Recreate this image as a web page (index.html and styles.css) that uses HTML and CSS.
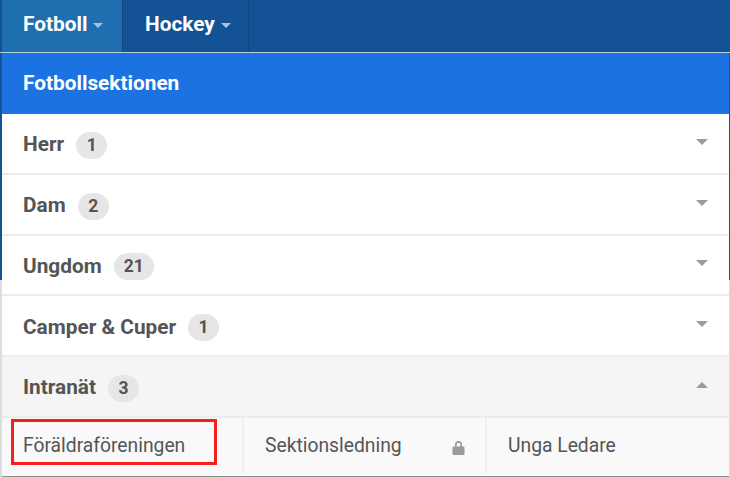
FILE: index.html
```html
<!DOCTYPE html>
<html lang="en">
  <head>
    <meta charset="UTF-8" />
    <meta name="viewport" content="width=device-width, initial-scale=1.0" />
    <title>Fotboll</title>
    <link rel="stylesheet" href="styles.css">
  </head>

  <body>
    <nav class="topnav">
      <a class="tab tab-active">Fotboll <span class="caret"></span></a>
      <a class="tab">Hockey <span class="caret"></span></a>
    </nav>

    <section class="panel">
      <h1 class="panel-title">Fotbollsektionen</h1>

      <div class="row">
        <span class="row-name">Herr</span>
        <span class="count">1</span>
        <span class="arrow"></span>
      </div>
      <div class="row">
        <span class="row-name">Dam</span>
        <span class="count">2</span>
        <span class="arrow"></span>
      </div>
      <div class="row">
        <span class="row-name">Ungdom</span>
        <span class="count">21</span>
        <span class="arrow"></span>
      </div>
      <div class="row">
        <span class="row-name">Camper &amp; Cuper</span>
        <span class="count">1</span>
        <span class="arrow"></span>
      </div>
      <div class="row row-open">
        <span class="row-name">Intranät</span>
        <span class="count">3</span>
        <span class="arrow arrow-up"></span>
      </div>

      <div class="sub">
        <a class="sub-item sub-first">Föräldraföreningen</a>
        <a class="sub-item sub-second">
          Sektionsledning
          <svg class="lock" width="13" height="15" viewBox="0 0 13 15">
            <path d="M3 7V4.6a3.5 3.5 0 0 1 7 0V7H8.3V4.6a1.8 1.8 0 0 0-3.6 0V7z" fill="#9b9b9b" />
            <rect x="0.5" y="6.5" width="12" height="8.5" rx="1.2" fill="#9b9b9b" />
          </svg>
        </a>
        <a class="sub-item">Unga Ledare</a>
      </div>
    </section>
  </body>
</html>
```

FILE: styles.css
```css
* {
  box-sizing: border-box;
}

body {
  margin: 0;
  height: 477px;
  overflow: hidden;
  background: linear-gradient(#135294 280px, #dcdcdc 280px);
  font-family: Roboto, "Liberation Sans", sans-serif;
}

.topnav {
  display: flex;
  height: 53px;
  padding-left: 2px;
  background-color: #135294;
  border-bottom: 1px solid #b9cde3;
}

.tab {
  display: flex;
  align-items: center;
  gap: 6px;
  width: 126px;
  padding: 0 0 5px 22px;
  color: #fff;
  font-size: 20.8px;
  font-weight: 700;
  border-right: 1px solid #0e4480;
}

.tab-active {
  width: 121px;
  padding-left: 21px;
  background-color: #1f6eb0;
}

.caret {
  width: 0;
  height: 0;
  margin-top: 3px;
  border-left: 5.5px solid transparent;
  border-right: 5.5px solid transparent;
  border-top: 5.5px solid #a9c1dc;
}

.panel {
  margin: 0 1px 0 2px;
  background-color: #fff;
}

.panel-title {
  margin: 0;
  height: 61px;
  padding-left: 21px;
  line-height: 60px;
  color: #fff;
  background-color: #1c72e0;
  font-size: 20.8px;
  font-weight: 700;
}

.row {
  display: flex;
  align-items: center;
  height: 60.75px;
  padding: 2px 21px 0;
  border-bottom: 2px solid #ececec;
  color: #555;
}

.row-open {
  background-color: #f5f5f5;
}

.row-name {
  font-size: 20.8px;
  font-weight: 700;
}

.count {
  min-width: 31px;
  height: 27px;
  margin: 2px 0 0 12px;
  padding: 0 10px;
  border-radius: 14px;
  background-color: #e6e6e6;
  font-size: 17.5px;
  font-weight: 700;
  line-height: 27px;
  text-align: center;
}

.arrow {
  width: 0;
  height: 0;
  margin-left: auto;
  margin-top: -5px;
  border-left: 6px solid transparent;
  border-right: 6px solid transparent;
  border-top: 6px solid #9b9b9b;
}

.arrow-up {
  border-top: 0;
  border-bottom: 6px solid #9b9b9b;
}

.sub {
  display: grid;
  grid-template-columns: 242px 243px 1fr;
  height: 59.25px;
  padding-bottom: 2px;
  background-color: #f9f9f9;
  border-bottom: 1px solid #8f8f8f;
  color: #555;
  font-size: 19.3px;
}

.sub-item {
  display: flex;
  align-items: center;
  padding-left: 21px;
  border-right: 2px solid #efefef;
}

.sub-item:last-child {
  border-right: 0;
}

/* red marker drawn over the first link */
.sub-first {
  position: relative;
}

.sub-first::after {
  content: "";
  position: absolute;
  left: 9px;
  top: 1px;
  width: 200px;
  height: 40px;
  border: 3px solid #f3201b;
}

.sub-second {
  justify-content: space-between;
  padding-right: 20px;
}

.lock {
  margin-top: 3px;
}
```
